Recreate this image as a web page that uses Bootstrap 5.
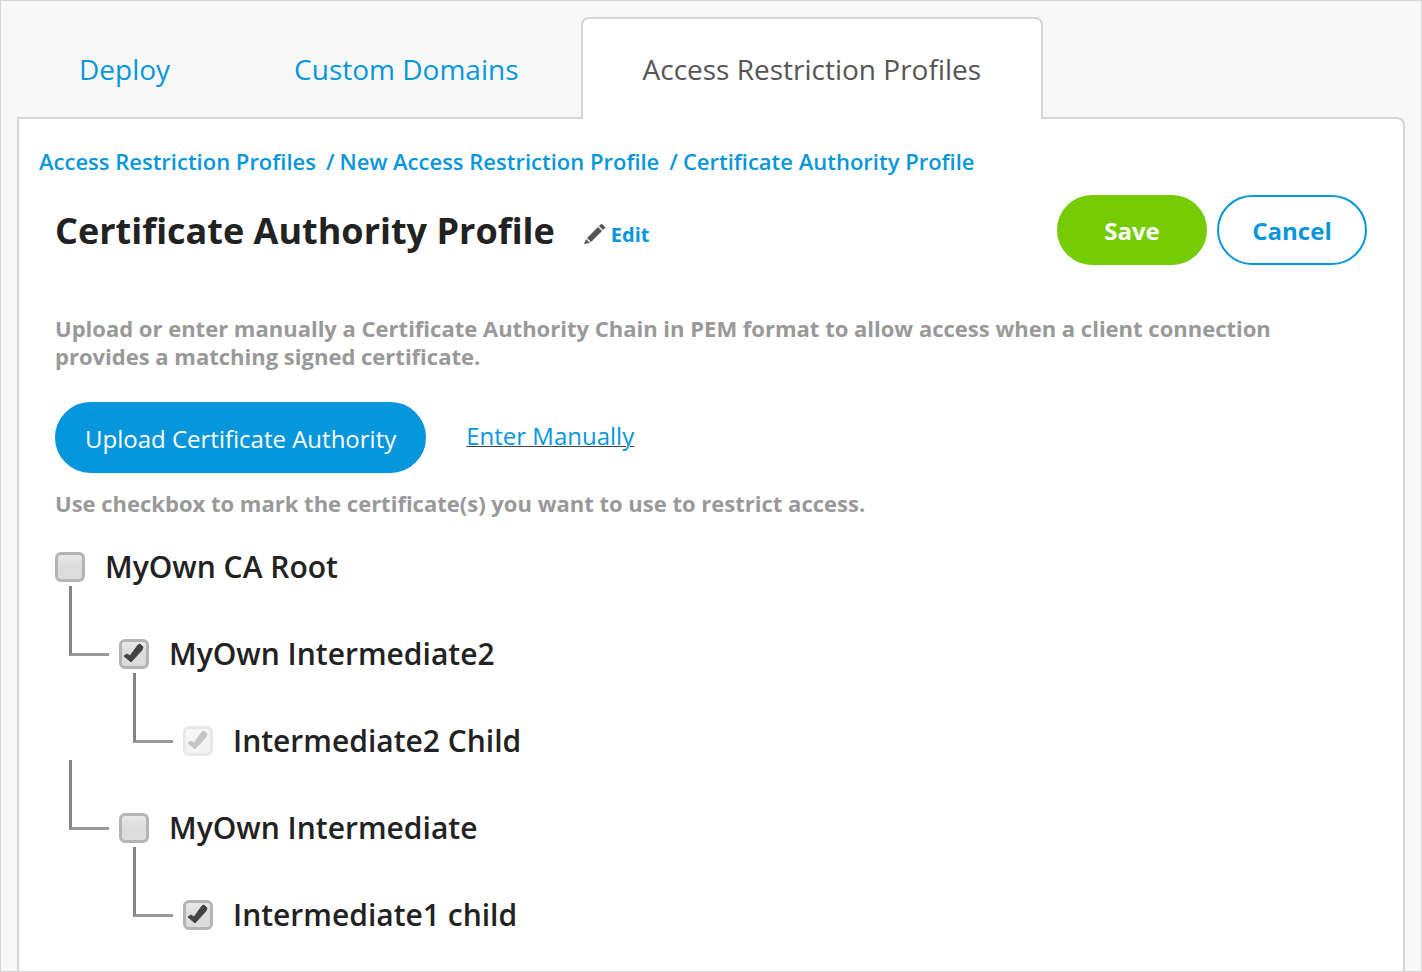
<!DOCTYPE html>
<html lang="en">
<head>
<meta charset="utf-8">
<meta name="viewport" content="width=device-width, initial-scale=1">
<title>Certificate Authority Profile</title>
<link href="https://cdn.jsdelivr.net/npm/bootstrap@5.3.0/dist/css/bootstrap.min.css" rel="stylesheet">
<style>
  :root { --brand: #0696dc; --line: #d6d6d6; --ink: #222; }
  body { font-family: "Open Sans", sans-serif; color: var(--ink); background: #f8f8f8; }
  a { color: var(--brand); }
  .app-frame { border: 1px solid var(--line); padding: 16px 16px 0; }

  .nav-tabs { border: 0; position: relative; z-index: 1; }
  .nav-tabs .nav-item { margin-bottom: -2px; }
  .nav-tabs .nav-link { margin: 0; border: 2px solid transparent; border-bottom: 0; border-radius: 8px 8px 0 0; padding: 30px 60px; font-size: 28px; line-height: 40px; color: var(--brand); }
  .nav-tabs .nav-link.active { color: #555; background: #fff; border-color: var(--line); }

  .panel { background: #fff; border: 2px solid var(--line); border-bottom: 0; border-radius: 0 8px 0 0; padding: 27px 20px; }
  .breadcrumb { --bs-breadcrumb-divider-color: var(--brand); font-size: 22px; line-height: 30px; font-weight: 600; margin-bottom: 19px; }
  .breadcrumb a { text-decoration: none; }
  .breadcrumb-item + .breadcrumb-item { padding-left: 10px; }
  .breadcrumb-item + .breadcrumb-item::before { padding-right: 5px; }
  .panel-content { padding: 0 16px; }

  .page-title { font-size: 36px; line-height: 50px; font-weight: 700; margin: 0; padding-top: 2px; }
  .edit-link { font-size: 20px; line-height: 28px; font-weight: 700; text-decoration: none; margin-left: 30px; padding-top: 10px; }
  .edit-link svg { overflow: visible; }
  .btn-pill { min-height: 70px; border-radius: 36px; border-width: 2px; font-size: 24px; line-height: 34px; padding: 2px 28px 0; }
  .btn-action { width: 150px; font-weight: 700; }
  .btn-action + .btn-action { margin-left: 10px; }
  .btn-save { --bs-btn-color: #fff; --bs-btn-bg: #76cc04; --bs-btn-border-color: #76cc04; --bs-btn-hover-color: #fff; --bs-btn-hover-bg: #69b603; }
  .btn-cancel { --bs-btn-color: var(--brand); --bs-btn-bg: #fff; --bs-btn-border-color: var(--brand); --bs-btn-hover-color: #fff; --bs-btn-hover-bg: var(--brand); }
  .btn-upload { --bs-btn-color: #fff; --bs-btn-bg: var(--brand); --bs-btn-border-color: var(--brand); --bs-btn-hover-color: #fff; --bs-btn-hover-bg: #0584c2; height: 71px; }
  .hint { font-size: 22px; line-height: 28px; font-weight: 700; color: #999; }
  .intro { margin: 49px 0 32px; }
  .tree-hint { margin: 16px 0 35px; }
  .manual-link { font-size: 24px; line-height: 34px; margin-left: 40px; padding-bottom: 4px; text-decoration-color: #444; text-decoration-thickness: 1px; }

  .cert-tree, .cert-tree ul { list-style: none; margin: 0; padding: 0; }
  .cert-tree > li > ul { padding-left: 14px; }
  .cert-tree ul ul { padding-left: 64px; }
  .node { display: flex; align-items: flex-end; }
  .node label { font-size: 30px; line-height: 30px; font-weight: 600; padding-left: 20px; }
  .cert-tree ul .node { height: 87px; }
  .cert-tree ul .node::before { content: ""; width: 40px; height: 70px; margin: 0 10px 13px 0; border: solid; border-color: #848484 #848484 #999; border-width: 0 0 3px 3px; }
  .node .form-check-input { width: 30px; height: 30px; margin: 0; flex: none; border: 3px solid #b4b4b4; border-radius: 6px; background: linear-gradient(#ebebeb, #dcdcdc 50%); background-origin: border-box; }
  .node .form-check-input:checked { background: url("data:image/svg+xml,%3Csvg xmlns='http://www.w3.org/2000/svg' viewBox='0 0 30 30'%3E%3Cpath d='M5 17l3-2 3 2 8-11 2-1 3 3-1 3-11 12z' fill='%23444' stroke='%23444' stroke-linejoin='round'/%3E%3C/svg%3E") center / 30px 30px border-box, linear-gradient(#ebebeb, #dcdcdc 50%) border-box; border-color: #b4b4b4; }
  .node .form-check-input:disabled { opacity: .3; }
  .node .form-check-input:disabled ~ label { opacity: 1; }
</style>
</head>
<body>
<div class="app-frame min-vh-100 d-flex flex-column">
  <ul class="nav nav-tabs">
    <li class="nav-item"><a class="nav-link" href="#deploy">Deploy</a></li>
    <li class="nav-item"><a class="nav-link" href="#domains">Custom Domains</a></li>
    <li class="nav-item"><a class="nav-link active" aria-current="page" href="#profiles">Access Restriction Profiles</a></li>
  </ul>
  <main class="panel flex-grow-1">
    <nav aria-label="Breadcrumb">
      <ol class="breadcrumb">
        <li class="breadcrumb-item"><a href="#profiles">Access Restriction Profiles</a></li>
        <li class="breadcrumb-item"><a href="#new">New Access Restriction Profile</a></li>
        <li class="breadcrumb-item"><a href="#ca">Certificate Authority Profile</a></li>
      </ol>
    </nav>
    <div class="panel-content">
      <header class="d-flex flex-wrap align-items-center">
        <h1 class="page-title">Certificate Authority Profile</h1>
        <a class="edit-link d-flex align-items-center" href="#edit">
          <svg class="me-1" width="22" height="22" viewBox="0 0 22 22" fill="#555" aria-hidden="true"><path d="M-1 20l2-5 4 4zM2 14L13 3l4 4L6 18zM14 2l2-2q1 0 2 1l2 2q1 1 0 1l-2 2z"/></svg>Edit</a>
        <div class="d-flex ms-auto">
          <button type="button" class="btn btn-pill btn-action btn-save">Save</button>
          <button type="button" class="btn btn-pill btn-action btn-cancel">Cancel</button>
        </div>
      </header>
      <p class="hint intro">Upload or enter manually a Certificate Authority Chain in PEM format to allow access when a client connection provides a matching signed certificate.</p>
      <div class="d-flex flex-wrap align-items-center">
        <button type="button" class="btn btn-pill btn-upload">Upload Certificate Authority</button>
        <a class="manual-link" href="#manual">Enter Manually</a>
      </div>
      <p class="hint tree-hint">Use checkbox to mark the certificate(s) you want to use to restrict access.</p>
      <ul class="cert-tree">
        <li>
          <div class="node"><input class="form-check-input" type="checkbox" id="root"><label for="root">MyOwn CA Root</label></div>
          <ul>
            <li>
              <div class="node"><input class="form-check-input" type="checkbox" id="int2" checked><label for="int2">MyOwn Intermediate2</label></div>
              <ul><li><div class="node"><input class="form-check-input" type="checkbox" id="int2child" checked disabled><label for="int2child">Intermediate2 Child</label></div></li></ul>
            </li>
            <li>
              <div class="node"><input class="form-check-input" type="checkbox" id="int1"><label for="int1">MyOwn Intermediate</label></div>
              <ul><li><div class="node"><input class="form-check-input" type="checkbox" id="int1child" checked><label for="int1child">Intermediate1 child</label></div></li></ul>
            </li>
          </ul>
        </li>
      </ul>
    </div>
  </main>
</div>
<script src="https://cdn.jsdelivr.net/npm/bootstrap@5.3.0/dist/js/bootstrap.bundle.min.js"></script>
</body>
</html>
